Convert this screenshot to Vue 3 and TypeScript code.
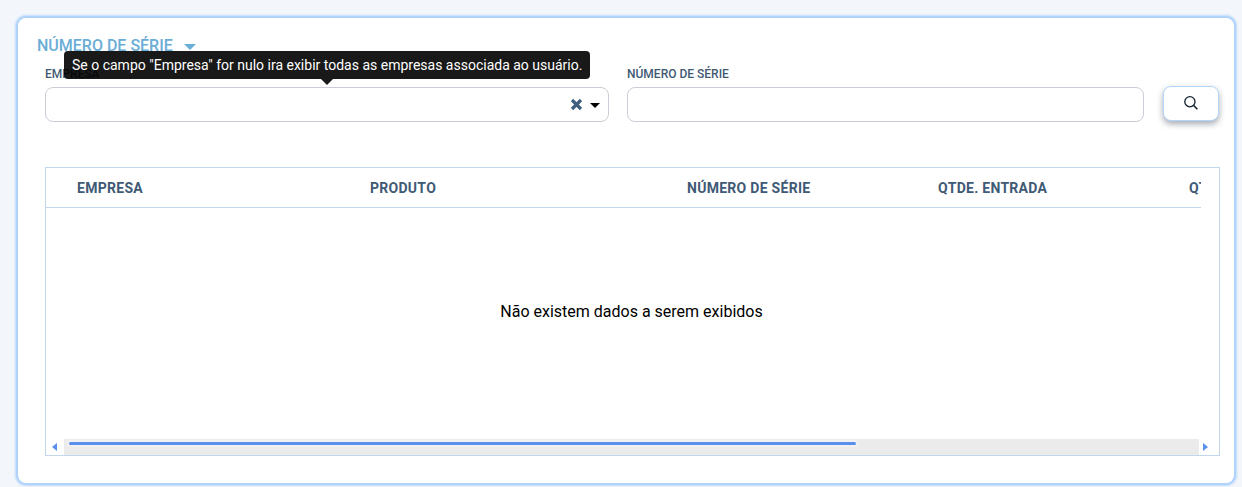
<script setup lang="ts">
const columns: { label: string; width: number }[] = [
  { label: 'EMPRESA', width: 293 },
  { label: 'PRODUTO', width: 317 },
  { label: 'NÚMERO DE SÉRIE', width: 251 },
  { label: 'QTDE. ENTRADA', width: 251 },
  { label: 'QTDE. SAÍDA', width: 150 },
]
</script>

<template>
  <div class="page">
    <section class="card">
      <header class="title-row">
        <h2 class="title">NÚMERO DE SÉRIE</h2>
        <span class="title-caret"></span>
      </header>

      <div class="filters">
        <div class="field field-company">
          <label class="label">EMPRESA</label>
          <div class="input select">
            <svg class="clear" viewBox="0 0 13 13" width="13" height="13">
              <path d="M2 2 L11 11 M11 2 L2 11" stroke="#3f5f7f" stroke-width="3.2" fill="none" />
            </svg>
            <span class="select-caret"></span>
          </div>
          <div class="tooltip">Se o campo "Empresa" for nulo ira exibir todas as empresas associada ao usuário.</div>
        </div>
        <div class="field field-serial">
          <label class="label">NÚMERO DE SÉRIE</label>
          <div class="input"></div>
        </div>
        <button class="search" type="button" aria-label="Pesquisar">
          <svg viewBox="0 0 16 16" width="16" height="16" fill="none" stroke="#10202f">
            <circle cx="6.9" cy="6.7" r="5.1" stroke-width="1.3" />
            <path d="M10.6 10.5 L14.4 14.3" stroke-width="1.6" />
          </svg>
        </button>
      </div>

      <div class="table">
        <div class="table-head-clip">
          <div class="table-head">
            <div v-for="c in columns" :key="c.label" class="th" :style="{ width: c.width + 'px' }">{{ c.label }}</div>
          </div>
        </div>
        <div class="empty">Não existem dados a serem exibidos</div>
        <div class="scrollbar">
          <span class="arrow arrow-left"></span>
          <div class="track"><div class="thumb"></div></div>
          <span class="arrow arrow-right"></span>
        </div>
      </div>
    </section>
  </div>
</template>

<style>
html, body {
  margin: 0;
  background: #f3f6fa;
}
</style>

<style scoped>
.page {
  box-sizing: border-box;
  width: 1242px;
  height: 487px;
  padding: 18px 8px 4px 18px;
  background: #f3f6fa;
  font-family: Roboto, "Liberation Sans", sans-serif;
  overflow: hidden;
}
.card {
  box-sizing: border-box;
  height: 465px;
  padding: 18px 14px 27px 19px;
  background: #fff;
  border-radius: 8px;
  box-shadow: 0 0 0 2px #b0d3fb, 0 0 2px 3px #bfdbfb;
}
.title-row {
  display: flex;
  align-items: center;
  gap: 11px;
  height: 20px;
}
.title {
  margin: 0;
  font-size: 16px;
  line-height: 20px;
  font-weight: 500;
  color: #6badd6;
}
.title-caret {
  width: 0;
  height: 0;
  margin-top: 1px;
  border-left: 6px solid transparent;
  border-right: 6px solid transparent;
  border-top: 6px solid #6badd6;
}
.filters {
  display: flex;
  align-items: flex-start;
  margin: 11px 0 0 8px;
}
.field {
  position: relative;
  display: flex;
  flex-direction: column;
}
.field-company {
  width: 564px;
  margin-right: 18px;
}
.field-serial {
  width: 517px;
  margin-right: 19px;
}
.label {
  height: 20px;
  font-size: 12px;
  line-height: 14px;
  font-weight: 500;
  color: #3f5a75;
}
.input {
  box-sizing: border-box;
  height: 35px;
  border: 1px solid #c9ced6;
  border-radius: 8px;
  background: #fff;
}
.select {
  display: flex;
  align-items: center;
  justify-content: flex-end;
  padding-right: 8px;
  gap: 7px;
}
.clear {
  display: block;
}
.select-caret {
  width: 0;
  height: 0;
  margin-top: 1px;
  border-left: 5px solid transparent;
  border-right: 5px solid transparent;
  border-top: 5px solid #000;
}
.tooltip {
  position: absolute;
  left: 19px;
  top: -16px;
  box-sizing: border-box;
  width: 526px;
  height: 28px;
  padding: 0 8px;
  border-radius: 4px;
  background: rgba(0, 0, 0, 0.9);
  color: #fff;
  font-size: 14px;
  line-height: 28px;
  white-space: nowrap;
}
.tooltip::after {
  content: "";
  position: absolute;
  left: 257px;
  top: 28px;
  width: 0;
  height: 0;
  border-left: 6px solid transparent;
  border-right: 6px solid transparent;
  border-top: 6px solid rgba(0, 0, 0, 0.9);
}
.search {
  display: flex;
  align-items: center;
  justify-content: center;
  box-sizing: border-box;
  width: 56px;
  height: 35px;
  margin-top: 19px;
  padding: 0 0 2px;
  border: 1px solid #b5d6fb;
  border-radius: 8px;
  background: #fff;
  box-shadow: 0 3px 6px rgba(30, 40, 60, 0.4);
}
.table {
  box-sizing: border-box;
  height: 289px;
  margin: 45px 0 0 8px;
  width: 1175px;
  border: 1px solid #c3d7ec;
  display: flex;
  flex-direction: column;
}
.table-head-clip {
  width: 1155px;
  overflow: hidden;
  border-bottom: 1px solid #c3d7ec;
  flex: none;
}
.table-head {
  display: flex;
  width: 1300px;
  height: 39px;
  padding-left: 31px;
}
.th {
  flex: none;
  font-size: 14px;
  line-height: 41px;
  font-weight: 700;
  letter-spacing: 0.28px;
  color: #3f5a75;
  white-space: nowrap;
}
.empty {
  flex: 1;
  display: flex;
  align-items: center;
  justify-content: center;
  padding: 0 2px 25px 0;
  font-size: 16px;
  color: #000;
}
.scrollbar {
  display: flex;
  align-items: center;
  height: 16px;
  flex: none;
}
.track {
  position: relative;
  flex: none;
  width: 1135px;
  height: 16px;
  margin: 0 4px 0 3px;
  background: #ebebeb;
}
.thumb {
  position: absolute;
  left: 5px;
  top: 3px;
  width: 787px;
  height: 3px;
  background: #5b8fee;
  box-shadow: 0 0 0 2px #f1f1f1;
  border-radius: 2px;
}
.arrow {
  flex: none;
  width: 0;
  height: 0;
  border-top: 4px solid transparent;
  border-bottom: 4px solid transparent;
}
.arrow-left {
  margin-left: 6px;
  border-right: 5px solid #5b8fee;
  margin-right: 4px;
}
.arrow-right {
  margin-left: 0;
  border-left: 5px solid #5b8fee;
}
</style>
